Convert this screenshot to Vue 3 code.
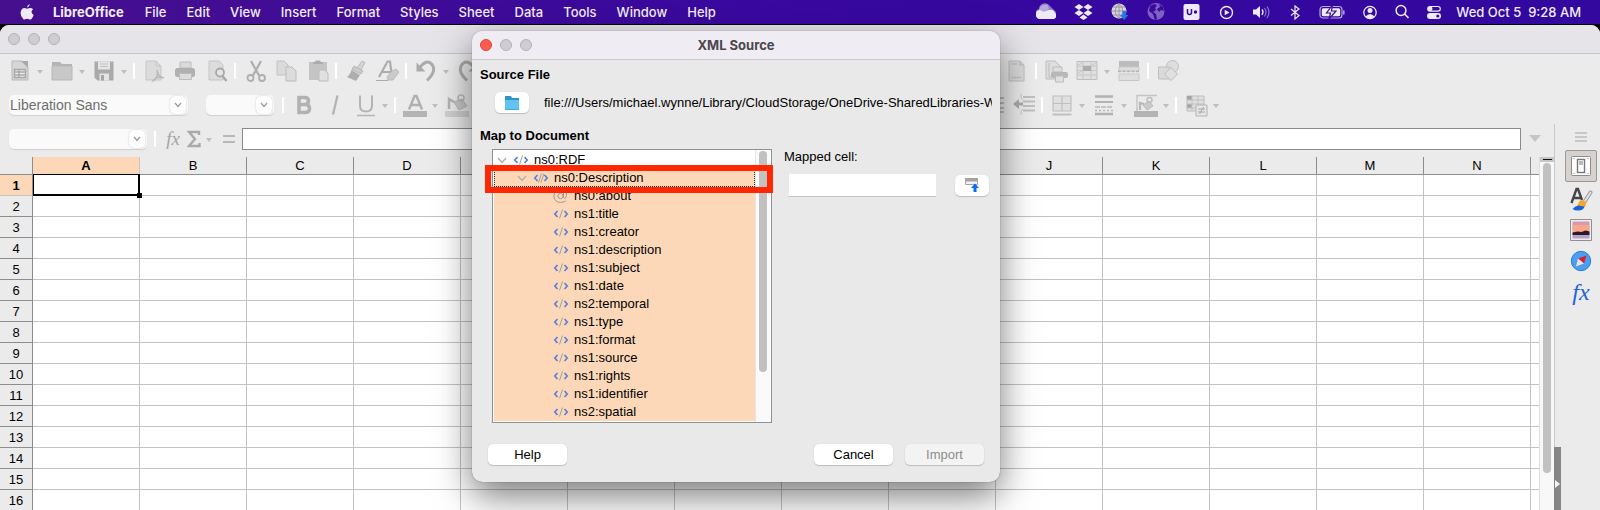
<script setup>
const menus = ['File', 'Edit', 'View', 'Insert', 'Format', 'Styles', 'Sheet', 'Data', 'Tools', 'Window', 'Help']
const clock = 'Wed Oct 5  9:28 AM'

const status = [
  { id: 'Cloud', w: 20, art: '<path d="M3 9a6 6 0 0 1 11-3l5 5a4 4 0 0 1-2 7H5a4 4 0 0 1-2-9z" fill="#8e79c6"/><path d="M0 14a4 4 0 0 1 4-4l5 1 4-1a5 5 0 0 1 6 3 3.500 3.500 0 0 1-1 6H4a4 4 0 0 1-4-5z" fill="#eeeaf7"/><path d="M3 9.500a6 6 0 0 1 9-4l1 3.500-5 3-4-2z" fill="#b7a8dc"/>' },
  { id: 'Dropbox', w: 19, art: '<path d="M5 4l4.500 3L5 10 .5 7zM14 4l4.500 3-4.500 3-4.500-3zM5 10l4.500 3L5 16 .5 13zM14 10l4.500 3-4.500 3-4.500-3zM9.500 14.500l4 3-4 2.500-4-2.500z"/>' },
  { id: 'Network', w: 18, art: '<circle cx="8" cy="11" r="7.500" fill="#d9d6dd"/><path d="M8 3.500v15M.5 11h15M2 7h12M2 15h12M8 3.500c-5 5-5 10 0 15M8 3.500c5 5 5 10 0 15" fill="none" stroke="#8a8598" stroke-width=".8"/><path d="M11.500 11h3.500v4h2.500L13 20l-4-5h2.500z" fill="#1b78ee"/>' },
  { id: 'Globe', w: 18, art: '<circle cx="9" cy="11.500" r="8.500" fill="#7d62c4"/><path d="M3 6l4-2 3 1-2 3 1 2-3 2 3 2 1 5-2 1-2-6-4-3zM12 4l4 3 1 4-3-1-2 2-2-3 3-2z" fill="#3a0a9c"/>' },
  { id: 'U plus', w: 17, art: '<rect x=".5" y="4" width="16" height="16" rx="2"/><path d="M4.500 9v3.500q0 2 2 2t2-2V9" fill="none" stroke="#3a0a9c" stroke-width="1.500"/><circle cx="12.500" cy="12" r="1.700" fill="#3a0a9c"/>' },
  { id: 'Play', w: 16, art: '<circle cx="8.500" cy="12.500" r="6" fill="none" stroke="#eeeaf7" stroke-width="1.400"/><path d="M6.700 9.700v5.600l4.800-2.800z"/>' },
  { id: 'Sound', w: 19, art: '<path d="M1 9.500h3l4-3.500v12l-4-3.500H1z"/><path d="M10 9.500q2 2.500 0 5.500" fill="none" stroke="#eeeaf7" stroke-width="1.300"/><path d="M12.500 8q3 4 0 8.500M15 6.500q4 5.500 0 11.500" fill="none" stroke="#8e79c6" stroke-width="1.200"/>' },
  { id: 'Bluetooth', w: 12, art: '<path d="M2 9l8 6.500-4 3.500V6l4 3-8 6.500" fill="none" stroke="#eeeaf7" stroke-width="1.200"/>' },
  { id: 'Battery', w: 26, art: '<rect x="1" y="6.500" width="22" height="11.500" rx="3" fill="none" stroke="#b7a8dc" stroke-width="1.200"/><path d="M24.800 10.500v4" stroke="#b7a8dc" stroke-width="1.500"/><rect x="2.800" y="8.200" width="18.400" height="8.100" rx="1.500"/><path d="M13.500 5l-6 8h4l-1.500 6 7-8h-4.500z" stroke="#3a0a9c" stroke-width="1.200"/>' },
  { id: 'User', w: 14, art: '<circle cx="7" cy="12.500" r="6.200" fill="none" stroke="#eeeaf7" stroke-width="1.300"/><circle cx="7" cy="10.500" r="2.500"/><path d="M2.500 16.500q4.500-5 9 0Q7 20.500 2.500 16.500z"/>' },
  { id: 'Search', w: 14, art: '<circle cx="6" cy="10.500" r="4.900" fill="none" stroke="#eeeaf7" stroke-width="1.500"/><path d="M9.500 14l4 4" stroke="#eeeaf7" stroke-width="1.600"/>' },
  { id: 'Control centre', w: 14, art: '<rect x=".7" y="6.500" width="12.600" height="4.600" rx="2.300" fill="none" stroke="#eeeaf7" stroke-width="1.200"/><circle cx="3.200" cy="8.800" r="2.300"/><rect x="0" y="13" width="14" height="6" rx="3"/><circle cx="10.800" cy="16" r="1.600" fill="#3a0a9c"/>' },
]

const icons = {
  New: '<path d="M4 2h10l6 6v13H4z" fill="#d6d6d6" stroke="#b8b8b8"/><path d="M13 2h7v7z" fill="#a8a8a8"/><path d="M6.500 10.500h11v8h-11zM6.500 13h11M6.500 16h11M11 10.500v8" fill="#ececec" stroke="#a8a8a8" stroke-width="1.400"/>',
  Open: '<path d="M2 3h8l2 2h10v4H2z" fill="#b4b4b4"/><path d="M2 7h20v14H2z" fill="#c8c8c8" stroke="#b8b8b8"/>',
  Save: '<path d="M2.500 2.500h19v19h-16l-3-3z" fill="#aaaaaa"/><path d="M6 2.500h12v8H6zM7.500 14.500h9.500v7H7.500z" fill="#e4e4e4"/><path d="M8 5h8M8 7.500h8" stroke="#c2c2c2"/><path d="M9 16h3v5.500H9z" fill="#a6a6a6"/>',
  PDF: '<path d="M4 2h10l5 5v14H4z" fill="#dcdcdc" stroke="#c6c6c6"/><path d="M14 2v5h5" fill="none" stroke="#c6c6c6"/><path d="M15 11c1 5 2 7 7 8-6-2-9 0-11 3 4-2 5-7 4-11z" fill="none" stroke="#b8b8b8" stroke-width="1.300"/>',
  Print: '<path d="M7 3h11v6H7z" fill="#dadada" stroke="#bcbcbc"/><rect x="2" y="9" width="20" height="9" rx="2.500" fill="#b0b0b0"/><path d="M6.500 14.500h12v6h-12z" fill="#dcdcdc" stroke="#bcbcbc"/>',
  Preview: '<path d="M5 2h10l4 4v15H5z" fill="#dcdcdc" stroke="#c4c4c4"/><circle cx="16" cy="13.500" r="4" fill="#e4e4e4" stroke="#a8a8a8" stroke-width="1.800"/><path d="M18.500 17l4 5" stroke="#a8a8a8" stroke-width="2.400"/>',
  Cut: '<path d="M8 2l8 14.500M18 2l-8 14.500" stroke="#aeaeae" stroke-width="2.200"/><circle cx="7.500" cy="19" r="3" fill="none" stroke="#aeaeae" stroke-width="1.800"/><circle cx="19" cy="19" r="3" fill="none" stroke="#aeaeae" stroke-width="1.800"/>',
  Copy: '<path d="M3 2h7l4 4v10H3z" fill="#dadada" stroke="#c2c2c2"/><path d="M12 8h6l4 4v10H12z" fill="#dcdcdc" stroke="#bcbcbc"/>',
  Paste: '<path d="M4 3h18v18H4z" fill="#c4c4c4"/><path d="M8 5V3h2l1-1.500h4L16 3h2v2z" fill="#acacac"/><path d="M14 11h6l3 3v8h-9z" fill="#e0e0e0" stroke="#bcbcbc"/>',
  Brush: '<path d="M18 2l3 1.500-4 7.500-4-2z" fill="#d4d4d4" stroke="#bcbcbc"/><path d="M10 7l9 5-2 3-9-4.500z" fill="#cccccc" stroke="#b6b6b6"/><path d="M7.500 11l8.500 5-4 6-9-4q3-2 4.500-7z" fill="#aeaeae"/>',
  Clear: '<path d="M4 18L12.500 2.500h2.500l2 15M7.500 13h8" fill="none" stroke="#acacac" stroke-width="2.200"/><path d="M1 21.500h12" stroke="#acacac"/><path d="M17 12l4-2 3 3-6 8h-5l-1-3z" fill="#cacaca" stroke="#bababa"/>',
  Undo: '<path d="M5 9.500Q13-1 18 5.500T13 21.500" fill="none" stroke="#ababab" stroke-width="3"/><path d="M2.500 3.500v9h9z" fill="#ababab"/>',
  Redo: '<path d="M19 9.500Q11-1 6 5.500T11 21.500" fill="none" stroke="#ababab" stroke-width="3"/><path d="M21.500 3.500v9h-9z" fill="#ababab"/>',
  Footer: '<path d="M4 2h11l4 4v16H4z" fill="#dadada" stroke="#bebebe"/><path d="M15 2v4h4M6.500 5h6M6.500 18.500h10" fill="none" stroke="#c2c2c2" stroke-width="1.600"/>',
  Area: '<path d="M2 2h9l5 5v13H2z" fill="#dedede" stroke="#bcbcbc"/><path d="M5 4v14h5" fill="none" stroke="#bcbcbc"/><path d="M9 8h9v5H9z" fill="#dedede" stroke="#bcbcbc"/><rect x="7" y="13" width="17" height="6" rx="2" fill="#b8b8b8"/><path d="M11.500 17h8v6h-8z" fill="#e0e0e0" stroke="#bcbcbc"/>',
  Freeze: '<path d="M2 2.500h20v18H2z" fill="#e0e0e0" stroke="#bebebe"/><path d="M2 7h20M2 11.500h20M2 16h20M8 2.500v18M16 2.500v18M2 7l6-4M16 7l6-4M2 15l6-4" fill="none" stroke="#c6c6c6"/><path d="M8 7h8v5H8z" fill="#acacac"/>',
  Split: '<path d="M2 2h20v6H2z" fill="#bbbbbb"/><path d="M2 8h20v4H2zM2 15h20v6.500H2z" fill="#dedede" stroke="#c8c8c8"/><path d="M1 12.500h22" stroke="#b4b4b4" stroke-width="1.300" stroke-dasharray="3 1.500"/>',
  Shapes: '<circle cx="16.500" cy="7.500" r="6" fill="#dedede" stroke="#bebebe"/><path d="M2.500 8h11v12h-11z" fill="#dadada" stroke="#bebebe"/><path d="M15 8.500l6.500 6.500-6.500 6.500L8.500 15z" fill="#e0e0e0" stroke="#bcbcbc"/>',
  Bold: '<path d="M8 4.500h5.500q4 0 4 3.500t-4 3.500H8zM8 11.500h6q4.500 0 4.500 4t-4.500 4H8z" fill="none" stroke="#b2b2b2" stroke-width="3.600"/>',
  Italic: '<path d="M15.500 2.500l-4.500 19" stroke="#b2b2b2" stroke-width="2.200"/>',
  Underline: '<path d="M7 2.500v10q0 6 6 6t6-6v-10" fill="none" stroke="#b4b4b4" stroke-width="2"/><path d="M4 22.500h18" stroke="#b4b4b4" stroke-width="1.500"/>',
  Color: '<path d="M6 16.500L11.500 3h2L19 16.500M8.500 12h8" fill="none" stroke="#b0b0b0" stroke-width="2.400"/><rect x="0" y="18" width="24" height="6" fill="#b4b4b4"/>',
  Highlight: '<path d="M4 16V6l5 3" fill="none" stroke="#b4b4b4" stroke-width="2.500"/><path d="M9 9l8-3 5 7-8 4z" fill="#c8c8c8" stroke="#b8b8b8"/><circle cx="16" cy="5" r="3" fill="none" stroke="#bcbcbc" stroke-width="1.500"/><rect x="0" y="18" width="24" height="6" fill="#cfcfcf"/>',
  Indent: '<path d="M4 5h20M4 10h20M4 15h20M4 19h20" stroke="#bcbcbc" stroke-width="1.800"/>',
  Outdent: '<path d="M12 4h12M12 8.500h12M12 13h12M12 17.500h12" stroke="#c0c0c0" stroke-width="1.800"/><path d="M10 1v4l2 2M10 22v-4l2-2" fill="none" stroke="#c4c4c4"/><path d="M2 11l6-5v3.500h4v3H8V16z" fill="#acacac"/>',
  Borders: '<path d="M3 3h18v15H3zM12 3v15M3 10.500h18" fill="#e0e0e0" stroke="#c0c0c0" stroke-width="1.200"/><path d="M2.500 21.500h19" stroke="#c0c0c0" stroke-width="2"/>',
  Lines: '<path d="M3 3.500h18M3 21h18" stroke="#b2b2b2" stroke-width="2.600"/><path d="M3 9h18" stroke="#b2b2b2" stroke-width="2"/><path d="M3 14h18" stroke="#b8b8b8" stroke-width="1.400" stroke-dasharray="5 1"/><path d="M3 17.500h18" stroke="#b8b8b8" stroke-width="1.400" stroke-dasharray="2 2"/>',
  BorderColor: '<path d="M3 18V2.500h20" fill="none" stroke="#c4c4c4" stroke-width="1.400"/><path d="M6 17v-7l4 1" fill="none" stroke="#b8b8b8" stroke-width="2.200"/><path d="M9 12l6-4 4 5-6 4z" fill="#cacaca" stroke="#bababa"/><circle cx="15.500" cy="7" r="2.500" fill="none" stroke="#bebebe" stroke-width="1.500"/><rect x="0" y="18" width="24" height="6" fill="#b4b4b4"/>',
  Conditional: '<path d="M3 3h17v15H3z" fill="#e0e0e0" stroke="#bcbcbc"/><path d="M3 3h5v4H3zM3 11h5v4H3z" fill="#a4a4a4"/><path d="M8 3v15M14 3v15M3 7h17M3 11h17M3 15h17" stroke="#c0c0c0"/><path d="M12 12h11v11H12z" fill="#e6e6e6" stroke="#b4b4b4"/><path d="M14 16h7M14 19h7M19.500 14l-4 7" stroke="#a8a8a8"/>',
}

const SEP = '|'
const MENU = 'v'
const bar1 = ['New', MENU, 'Open', MENU, 'Save', MENU, SEP, 'PDF', 'Print', 'Preview', SEP, 'Cut', 'Copy', 'Paste', SEP, 'Brush', 'Clear', SEP, 'Undo', MENU, 'Redo']
const bar1End = ['Footer', SEP, 'Area', 'Freeze', MENU, 'Split', SEP, 'Shapes']
const bar2 = [SEP, 'Bold', 'Italic', 'Underline', MENU, SEP, 'Color', MENU, 'Highlight']
const bar2End = ['Indent', 'Outdent', SEP, 'Borders', MENU, 'Lines', MENU, 'BorderColor', MENU, SEP, 'Conditional', MENU]

const columns = 'ABCDEFGHIJKLMN'.split('')
const rows = 16

const children = ['title', 'creator', 'description', 'subject', 'date', 'temporal', 'type', 'format', 'source', 'rights', 'identifier', 'spatial']
const ns2 = ['temporal', 'spatial']
const nodes = [
  { name: 'ns0:RDF', depth: 0, kind: 'element', open: true },
  { name: 'ns0:Description', depth: 1, kind: 'repeat', open: true },
  { name: 'ns0:about', depth: 2, kind: 'attribute' },
  ...children.map(c => ({ name: (ns2.includes(c) ? 'ns2:' : 'ns1:') + c, depth: 2, kind: 'element' })),
]
</script>

<template>
  <div class="desktop">
    <header class="menubar">
      <svg class="apple" viewBox="0 0 14 16" aria-label="Apple"><path d="M9.700 0q.2 2.600-2.600 3.700Q7 1.200 9.700 0zM7.200 4.700q2.500-1.400 4.600-.4l1.300 1q-3.400 2.700.5 5.700-1.500 4.300-3.300 4.500-1 0-2-.5-1.300-.4-2.500.1-1.400.8-2.400.1Q.6 12.600.6 9.200q.2-4.500 3.400-5.200 1.600 0 3.200.7z" fill="#eeeaf7" /></svg>
      <nav class="menus">
        <button class="menu app">LibreOffice</button>
        <button v-for="m in menus" :key="m" class="menu">{{ m }}</button>
      </nav>
      <div class="status">
        <svg v-for="s in status" :key="s.id" class="stat" :width="s.w" height="24" :viewBox="`0 0 ${s.w} 24`" :aria-label="s.id" v-html="s.art"></svg>
      </div>
      <time class="clock">{{ clock }}</time>
    </header>

    <main class="window">
      <div class="titlebar"><i class="light"></i><i class="light"></i><i class="light"></i></div>

      <div class="toolbar">
        <template v-for="(t, i) in bar1" :key="i">
          <i v-if="t === SEP" class="sep"></i>
          <button v-else-if="t === MENU" class="more" aria-label="More"></button>
          <button v-else class="tool" :aria-label="t"><svg viewBox="0 0 24 24" v-html="icons[t]"></svg></button>
        </template>
        <span class="gap"></span>
        <template v-for="(t, i) in bar1End" :key="'e' + i">
          <i v-if="t === SEP" class="sep"></i>
          <button v-else-if="t === MENU" class="more" aria-label="More"></button>
          <button v-else class="tool" :aria-label="t"><svg viewBox="0 0 24 24" v-html="icons[t]"></svg></button>
        </template>
      </div>

      <div class="toolbar formatting">
        <label class="combo font"><select aria-label="Font name"><option>Liberation Sans</option></select><span class="knob"><svg viewBox="0 0 8 6"><path d="M1 1l3 3.500L7 1" /></svg></span></label>
        <label class="combo size"><select aria-label="Font size"><option></option></select><span class="knob"><svg viewBox="0 0 8 6"><path d="M1 1l3 3.500L7 1" /></svg></span></label>
        <template v-for="(t, i) in bar2" :key="i">
          <i v-if="t === SEP" class="sep"></i>
          <button v-else-if="t === MENU" class="more" aria-label="More"></button>
          <button v-else class="tool" :aria-label="t"><svg viewBox="0 0 24 24" v-html="icons[t]"></svg></button>
        </template>
        <span class="gap"></span>
        <template v-for="(t, i) in bar2End" :key="'e' + i">
          <i v-if="t === SEP" class="sep"></i>
          <button v-else-if="t === MENU" class="more" aria-label="More"></button>
          <button v-else class="tool" :aria-label="t"><svg viewBox="0 0 24 24" v-html="icons[t]"></svg></button>
        </template>
      </div>

      <div class="body">
        <section class="work">
          <div class="formula">
            <label class="combo cellname"><select aria-label="Name box"><option></option></select><span class="knob"><svg viewBox="0 0 8 6"><path d="M1 1l3 3.500L7 1" /></svg></span></label>
            <i class="sep"></i>
            <button class="fx">fx</button>
            <button class="sum" aria-label="Sum"><svg viewBox="0 0 14 18"><path d="M12 5V2H2l6 7-6 7h10.500v-3" /></svg></button>
            <button class="more" aria-label="More"></button>
            <button class="eq" aria-label="Formula"><svg viewBox="0 0 14 10"><path d="M1 2h12M1 8h12" /></svg></button>
            <input class="line" aria-label="Formula line" />
            <button class="expand" aria-label="Expand"></button>
          </div>
          <div class="sheet">
            <div class="cells">
              <table>
                <thead>
                  <tr><th class="corner"></th><th v-for="c in columns" :key="c" :class="{ on: c === 'A' }">{{ c }}</th><th class="next"></th></tr>
                </thead>
                <tbody>
                  <tr v-for="r in rows" :key="r">
                    <th :class="{ on: r === 1 }">{{ r }}</th>
                    <td v-for="c in columns" :key="c"><i v-if="r === 1 && c === 'A'" class="cursor"></i></td>
                    <td></td>
                  </tr>
                </tbody>
              </table>
            </div>
            <div class="vscroll"><i class="splitter"></i><i class="thumb"></i></div>
          </div>
        </section>
        <aside class="sidebar">
          <button class="side burger" aria-label="Sidebar settings"><svg viewBox="0 0 12 10"><path d="M0 1h12M0 5h12M0 9h12" stroke="#a6a6a6" stroke-width="1.200" /></svg></button>
          <button class="side active" aria-label="Properties"><svg viewBox="0 0 24 24"><rect x="2.500" y="2.500" width="19" height="19" rx="1" fill="#fdfdfd" stroke="#8c8c8c" /><rect x="8.500" y="5.500" width="7" height="13" fill="#fff" stroke="#777" stroke-width="1.400" /><path d="M10 7h4v4h-4z" fill="#bbb" /><path d="M4.500 4.500h1M18.500 4.500h1M4.500 19.500h1M18.500 19.500h1" stroke="#888" /></svg></button>
          <button class="side" aria-label="Styles"><svg viewBox="0 0 24 24"><path d="M2.500 16L7.500 2h1.500l4 11M4.500 11h7" fill="none" stroke="#454545" stroke-width="2.400" /><path d="M21.500 5.500L16 14" stroke="#9a9a9a" stroke-width="4" stroke-linecap="round" /><path d="M21.500 5.500L16 14" stroke="#e2e2e2" stroke-width="2" stroke-linecap="round" /><path d="M10 14.500q3-3 7.500 1l-1.500 4.500-8-.5z" fill="#f9a72b" /><path d="M3.500 22q3-3.500 6-3.500l6 1q-1 4-6 4-3 .5-6-1.500z" fill="#1565d8" /></svg></button>
          <button class="side" aria-label="Gallery"><svg viewBox="0 0 24 24"><path d="M1.500 1.500h21v21h-21z" fill="#eee" stroke="#8e8e96" /><path d="M3.500 3.500h17v9h-17z" fill="#d39bb0" /><path d="M3.500 7h17v8h-17z" fill="#f9a78a" /><path d="M3.500 15h17v5.500h-17z" fill="#b9a2c8" /><path d="M3.500 14.500l5-1 4 .5 4-1.500 4 1v3.500h-17z" fill="#2a1c26" /></svg></button>
          <button class="side" aria-label="Navigator"><svg viewBox="0 0 24 24"><circle cx="12" cy="12" r="9.700" fill="#4a9ef0" stroke="#2f7cd0" /><path d="M17.500 6.500l-2.500 8-6-5z" fill="#d8202a" /><path d="M7 17.500l2-8 6 5z" fill="#e4e4ea" /></svg></button>
          <button class="side func">fx</button>
          <i class="handle"></i>
        </aside>
      </div>
    </main>

    <section class="dialog" role="dialog" aria-labelledby="dlg-title">
      <div class="dlg-bar"><i class="light close"></i><i class="light"></i><i class="light"></i><h1 id="dlg-title">XML Source</h1></div>
      <div class="dlg-body">
        <h2>Source File</h2>
        <div class="file">
          <button class="push browse" aria-label="Browse"><svg viewBox="0 0 16 16"><path d="M1 1h6l1 2h7v12H1z" fill="#2f93c6" /><path d="M1 5h14v9.500H1z" fill="#63c3ef" /></svg></button>
          <output class="path">file:///Users/michael.wynne/Library/CloudStorage/OneDrive-SharedLibraries-W</output>
        </div>
        <h2>Map to Document</h2>
        <div class="map">
          <div class="tree">
            <ul role="tree">
              <li v-for="n in nodes" :key="n.name" role="treeitem" :class="['node', 'd' + n.depth]">
                <svg v-if="n.open" class="twist" viewBox="0 0 10 7"><path d="M1 1l4 4.500L9 1" /></svg>
                <svg v-if="n.kind === 'attribute'" class="tag" viewBox="0 0 16 16"><circle cx="7.500" cy="8" r="2.600" fill="none" stroke="#999" /><path d="M10.500 5v4.500q1 2 2.500 0Q15.500 2 8 1.500 1 2 1 8t6.500 6.500q3 0 5-1.500" fill="none" stroke="#999" /></svg>
                <svg v-else class="tag" viewBox="0 0 16 16"><path d="M4.500 5L1.800 8l2.700 3M11.500 5l2.700 3-2.700 3" fill="none" stroke="#5a80dc" stroke-width="1.700" /><path v-if="n.kind === 'element'" d="M9.500 3.500l-3 9" stroke="#a0a0a0" /><path v-else d="M8.500 3.500l-3 9M11 3.500l-3 9" stroke="#a0a0a0" /></svg>
                <span>{{ n.name }}</span>
              </li>
            </ul>
            <div class="treescroll"><i class="thumb"></i></div>
            <i class="marker"></i>
          </div>
          <div class="mapped">
            <label for="cell">Mapped cell:</label>
            <div class="pick">
              <input id="cell" />
              <button class="push shrink" aria-label="Shrink"><svg viewBox="0 0 16 16"><path d="M1.500 1.500h12v6h-12z" fill="#f2f2f2" stroke="#a4a4a4" /><path d="M1 1h13v3.500H1z" fill="#a4a4a4" /><path d="M11 6.500l4 4.500h-2.500v4h-3v-4H7z" fill="#0a6cf5" /></svg></button>
            </div>
          </div>
        </div>
        <div class="actions">
          <button class="push wide">Help</button>
          <span class="grow"></span>
          <button class="push wide">Cancel</button>
          <button class="push wide" disabled>Import</button>
        </div>
      </div>
    </section>
  </div>
</template>

<style>
body { background: #000; overflow: hidden; }
</style>

<style scoped>
* { box-sizing: border-box; }
.desktop { position: relative; display: flex; flex-direction: column; height: 100vh; background: #000; font: 13px/16px "Liberation Sans", Arial, sans-serif; color: #000; }
button, select, input { font: inherit; color: inherit; margin: 0; padding: 0; border: 0; background: none; }
i { display: block; }
svg { display: block; }

.menubar { display: flex; align-items: center; height: 24px; flex: none; margin-bottom: 1px; padding: 0 19px 0 20px; background: linear-gradient(90deg, #460f8e, #3808a0 50%, #32089e); color: #f1edf8; font-family: Inter, sans-serif; font-weight: 500; }
.apple { width: 14px; height: 16px; margin-right: 19px; }
.menus { display: flex; gap: 20px; }
.menu { white-space: nowrap; font-weight: 500; }
.app { font-weight: 700; margin-right: 1px; }
.status { display: flex; gap: 18px; margin-left: auto; margin-right: 15px; }
.stat { fill: #eeeaf7; }
.clock { white-space: pre; }

.window { flex: 1; min-height: 0; display: flex; flex-direction: column; background: #ebebeb; border-radius: 9px 9px 0 0; overflow: hidden; }
.titlebar { display: flex; align-items: center; gap: 8px; flex: none; height: 29px; padding-left: 8px; background: #e6e4e9; border-bottom: 1px solid #c5c4c8; }
.light { width: 12px; height: 12px; border-radius: 50%; background: #cfcdd2; border: 1px solid #b3b1b6; }
.toolbar { display: flex; align-items: center; flex: none; height: 33px; padding-left: 4px; }
.formatting { height: 35px; padding-left: 9px; }
.tool { flex: none; width: 31px; height: 24px; }
.tool svg { width: 24px; height: 24px; margin: 0 auto; }
.more { flex: none; width: 11px; height: 20px; }
.more::after { content: ""; display: block; margin: 3px 0 0 2px; width: 0; border: 3px solid transparent; border-top: 4px solid #bebebe; border-bottom: 0; }
.sep { flex: none; width: 8px; height: 16px; background: linear-gradient(#fff, #fff) center / 2px 16px no-repeat; }
.gap { flex: none; width: 518px; }
.formatting .gap { width: 504px; }
.combo { position: relative; flex: none; height: 20px; background: #fafafa; border-radius: 5px; box-shadow: 0 1px 1px #cfcfcf; }
.combo select { appearance: none; width: 100%; height: 20px; padding-left: 1px; color: #6e6e6e; font-size: 14px; }
.knob { position: absolute; right: 2px; top: 1px; width: 16px; height: 18px; border-radius: 5px; background: #fdfdfd; box-shadow: 0 0 2px #c4c4c4; display: grid; place-items: center; pointer-events: none; }
.knob svg { width: 8px; height: 6px; fill: none; stroke: #9c9c9c; stroke-width: 1.3; }
.font { width: 179px; margin-right: 18px; }
.size { width: 68px; margin-right: 5px; }

.body { flex: 1; min-height: 0; display: flex; }
.work { flex: 1; min-width: 0; display: flex; flex-direction: column; }
.formula { display: flex; align-items: center; flex: none; height: 35px; padding: 0 0 2px 9px; }
.cellname { width: 138px; margin-right: 4px; }
.fx { width: 28px; font: italic 19px/20px "Liberation Serif", serif; color: #a4a4a4; }
.sum { width: 17px; }
.sum svg { width: 14px; height: 18px; fill: none; stroke: #aaa; stroke-width: 2.4; }
.eq { width: 27px; }
.eq svg { width: 14px; height: 10px; margin: 0 auto; stroke: #b8b8b8; stroke-width: 2; }
.line { flex: 1; min-width: 0; height: 22px; background: #fff; border: 1px solid #8b8b8b; }
.expand { width: 33px; height: 10px; }
.expand::after { content: ""; display: block; width: 0; margin-left: 8px; border: 6px solid transparent; border-top: 7px solid #c6c6c6; border-bottom: 0; }

.sheet { flex: 1; min-height: 0; display: flex; }
.cells { flex: 1; min-width: 0; overflow: hidden; }
table { table-layout: fixed; width: 1638px; border-collapse: separate; border-spacing: 0; background: #fff; }
th, td { padding: 0; height: 21px; border-right: 1px solid #c3c3c3; border-bottom: 1px solid #c3c3c3; }
td { position: relative; }
th { background: #ebebeb; font-weight: 400; text-align: center; border-color: #8d8d8d; }
tbody th { padding-top: 1px; }
thead th { width: 107px; height: 18px; }
thead .corner { width: 33px; }
th.on { background: #fcd8b9; font-weight: 700; }
thead th.on { border-right-color: #c9c3be; }
tbody th.on { border-bottom-color: #c9c3be; }
.cursor { position: absolute; inset: -1px -1px -1px 0; border: 1px solid #000; box-shadow: inset -1px -1px #000; z-index: 1; }
.cursor::after { content: ""; position: absolute; right: -3px; bottom: -3px; width: 5px; height: 5px; background: #000; }
.vscroll { width: 15px; background: #f8f8f8; border-left: 1px solid #dedede; display: flex; flex-direction: column; align-items: center; }
.splitter { width: 14px; height: 5px; background: linear-gradient(#111, #111) center 2px / 9px 1px no-repeat #c6c6c6; }
.vscroll .thumb { width: 8px; height: 310px; margin-top: 1px; border-radius: 4px; background: #c1c1c1; }
.sidebar { position: relative; width: 46px; margin-top: 2px; border-left: 1px solid #c9c9c9; padding-left: 7px; display: flex; flex-direction: column; align-items: center; }
.side { flex: none; width: 32px; height: 31px; display: grid; place-items: center; }
.side svg { width: 24px; height: 24px; }
.burger { height: 26px; }
.burger svg { width: 12px; height: 10px; }
.active { height: 32px; margin-bottom: 1px; background: #d8d2ce; border: 1px solid #9c9794; border-radius: 2px; }
.func { font: italic 24px/24px "Liberation Serif", serif; color: #2262dc; }
.handle { position: absolute; left: -1px; top: 323px; bottom: 0; width: 7px; background: #868686; }
.handle::after { content: ""; position: absolute; left: 1px; top: 33px; border: 4px solid transparent; border-left: 5px solid #f4f4f4; border-right: 0; }

.dialog { position: absolute; left: 472px; top: 31px; width: 528px; border-radius: 10px; background: #e9e9e9; box-shadow: 0 0 1px rgba(0, 0, 0, .6), 0 14px 36px rgba(0, 0, 0, .52); }
.dlg-bar { display: flex; align-items: center; gap: 8px; height: 29px; padding-left: 8px; position: relative; background: #f0ecf4; border-bottom: 1px solid #cbc8ce; border-radius: 10px 10px 0 0; }
.close { background: #fe5b51; border-color: #de443b; }
h1 { position: absolute; left: 0; right: 0; margin: 0; text-align: center; font: 700 13px/16px Inter, sans-serif; color: #4a484d; pointer-events: none; }
.dlg-body { padding: 7px 8px 17px; }
h2 { margin: 0; font-size: 13px; line-height: 16px; font-weight: 700; }
.file { display: flex; align-items: center; gap: 15px; padding: 9px 0 15px 15px; }
.push { flex: none; height: 21px; background: #fff; border-radius: 5px; box-shadow: 0 1px 1px #bdbdbd, 0 0 1px #c8c8c8; display: grid; place-items: center; }
.browse, .shrink { width: 34px; }
.push svg { width: 16px; height: 16px; }
.path { flex: 1; min-width: 0; overflow: hidden; white-space: nowrap; }
.map { display: flex; padding: 5px 3px 0 12px; gap: 12px; }
.tree { position: relative; flex: none; width: 280px; height: 274px; display: flex; background: #fff; border: 1px solid #8f9194; }
ul { flex: 1; min-width: 0; margin: 1px 0 0 1px; padding: 0; list-style: none; }
.node { display: flex; align-items: center; height: 18px; background: #fcd8b9; }
.d0 { background: #fff; padding-left: 3px; }
.d1 { padding-left: 22px; border: 1px dotted #333; }
.d2 { padding-left: 59px; }
.twist { width: 10px; height: 7px; margin-right: 6px; fill: none; stroke: #b4aca6; stroke-width: 1.4; }
.tag { width: 16px; height: 16px; margin-right: 5px; }
.treescroll { width: 16px; background: #fafafa; border-left: 1px solid #e6e6e6; }
.treescroll .thumb { width: 8px; height: 221px; margin: 1px 0 0 3px; border-radius: 4px; background: #c1c1c1; }
.marker { position: absolute; left: -8px; right: -2px; top: 15px; height: 28px; border: 6px solid #ff2600; }
.mapped { flex: 1; min-width: 0; }
.pick { display: flex; justify-content: space-between; align-items: center; margin-top: 9px; padding-left: 5px; }
.pick input { width: 147px; height: 22px; background: #fff; box-shadow: 0 1px 0 #c4c4c4; }
.actions { display: flex; gap: 12px; padding: 21px 8px 0; }
.wide { width: 79px; }
.grow { flex: 1; }
.push:disabled { background: #f3f3f3; color: #8b8b8b; }
</style>
